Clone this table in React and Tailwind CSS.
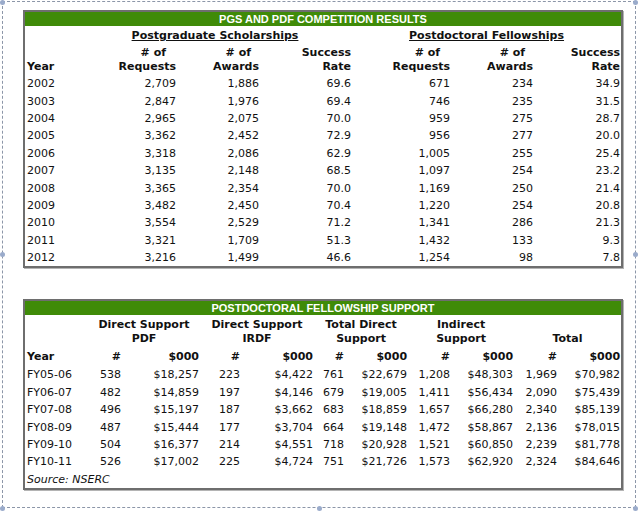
import React from 'react';

const pgs = [
  ['2002', '2,709', '1,886', '69.6', '671', '234', '34.9'],
  ['3003', '2,847', '1,976', '69.4', '746', '235', '31.5'],
  ['2004', '2,965', '2,075', '70.0', '959', '275', '28.7'],
  ['2005', '3,362', '2,452', '72.9', '956', '277', '20.0'],
  ['2006', '3,318', '2,086', '62.9', '1,005', '255', '25.4'],
  ['2007', '3,135', '2,148', '68.5', '1,097', '254', '23.2'],
  ['2008', '3,365', '2,354', '70.0', '1,169', '250', '21.4'],
  ['2009', '3,482', '2,450', '70.4', '1,220', '254', '20.8'],
  ['2010', '3,554', '2,529', '71.2', '1,341', '286', '21.3'],
  ['2011', '3,321', '1,709', '51.3', '1,432', '133', '9.3'],
  ['2012', '3,216', '1,499', '46.6', '1,254', '98', '7.8'],
];

const pdf = [
  ['FY05-06', '538', '$18,257', '223', '$4,422', '761', '$22,679', '1,208', '$48,303', '1,969', '$70,982'],
  ['FY06-07', '482', '$14,859', '197', '$4,146', '679', '$19,005', '1,411', '$56,434', '2,090', '$75,439'],
  ['FY07-08', '496', '$15,197', '187', '$3,662', '683', '$18,859', '1,657', '$66,280', '2,340', '$85,139'],
  ['FY08-09', '487', '$15,444', '177', '$3,704', '664', '$19,148', '1,472', '$58,867', '2,136', '$78,015'],
  ['FY09-10', '504', '$16,377', '214', '$4,551', '718', '$20,928', '1,521', '$60,850', '2,239', '$81,778'],
  ['FY10-11', '526', '$17,002', '225', '$4,724', '751', '$21,726', '1,573', '$62,920', '2,324', '$84,646'],
];

const font = { fontFamily: '"DejaVu Sans", Verdana, sans-serif' };

function Box({ title, children }) {
  return (
    <div className="w-[600px] border-2 border-[#6e6e6e] bg-white shadow-[1px_1px_0_#b4b4b4]">
      <div className="h-[14px] bg-[#3f8b08] text-center text-[11px] font-bold leading-[14px] text-white font-['Liberation_Sans',Arial,sans-serif]">
        {title}
      </div>
      {children}
    </div>
  );
}

function Handle({ className }) {
  return <span className={`absolute h-[5px] w-[5px] rounded-full bg-[#9aabcb] ${className}`} />;
}

export default function App() {
  return (
    <div className="relative h-[511px] w-[640px] bg-white text-[#111]" style={font}>
      <div className="ml-[2px] mt-[1px] h-[507px] w-[634px] border border-dashed border-[#8c96a8] pl-[20px] pt-[8px]">
        <Box title="PGS AND PDF COMPETITION RESULTS">
          <table className="w-full table-fixed border-collapse text-[11px]">
            <colgroup>
              <col className="w-[53px]" />
              <col className="w-[99px]" />
              <col className="w-[83px]" />
              <col className="w-[92px]" />
              <col className="w-[99px]" />
              <col className="w-[83px]" />
              <col className="w-[87px]" />
            </colgroup>
            <thead className="font-bold">
              <tr className="h-[19px]">
                <th />
                <th colSpan={3} className="pt-[2px] text-center font-bold underline">Postgraduate Scholarships</th>
                <th colSpan={3} className="pt-[2px] text-center font-bold underline">Postdoctoral Fellowships</th>
              </tr>
              <tr className="h-[30px] align-bottom leading-[14px]">
                <th className="pb-[1px] pl-[2px] text-left">Year</th>
                <th className="pb-[1px] pr-[1px] text-right">
                  <div className="ml-auto w-fit pr-[10px] text-center"># of</div>
                  Requests
                </th>
                <th className="pb-[1px] pr-[1px] text-right">
                  <div className="ml-auto w-fit pr-[8px] text-center"># of</div>
                  Awards
                </th>
                <th className="pb-[1px] pr-[1px] text-right">Success<br />Rate</th>
                <th className="pb-[1px] pr-[1px] text-right">
                  <div className="ml-auto w-fit pr-[10px] text-center"># of</div>
                  Requests
                </th>
                <th className="pb-[1px] pr-[1px] text-right">
                  <div className="ml-auto w-fit pr-[8px] text-center"># of</div>
                  Awards
                </th>
                <th className="pb-[1px] pr-[1px] text-right">Success<br />Rate</th>
              </tr>
            </thead>
            <tbody>
              {pgs.map((r) => (
                <tr key={r[0]} className="h-[17.4px] leading-[17px]">
                  {r.map((c, i) => (
                    <td key={i} className={i === 0 ? 'pl-[2px] text-left' : 'pr-[1px] text-right'}>{c}</td>
                  ))}
                </tr>
              ))}
            </tbody>
          </table>
        </Box>

        <div className="h-[31px]" />

        <Box title="POSTDOCTORAL FELLOWSHIP SUPPORT">
          <table className="w-full table-fixed border-collapse text-[11px]">
            <colgroup>
              <col className="w-[63px]" />
              <col className="w-[34px]" />
              <col className="w-[78px]" />
              <col className="w-[41px]" />
              <col className="w-[73px]" />
              <col className="w-[31px]" />
              <col className="w-[63px]" />
              <col className="w-[43px]" />
              <col className="w-[63px]" />
              <col className="w-[44px]" />
              <col className="w-[63px]" />
            </colgroup>
            <thead>
              <tr className="h-[32px] align-bottom leading-[14px]">
                <th />
                <th colSpan={2} className="pb-[1px] text-center font-bold">Direct Support<br />PDF</th>
                <th colSpan={2} className="pb-[1px] text-center font-bold">Direct Support<br />IRDF</th>
                <th colSpan={2} className="pb-[1px] text-center font-bold">Total Direct<br />Support</th>
                <th colSpan={2} className="pb-[1px] text-center font-bold">Indirect<br />Support</th>
                <th colSpan={2} className="pb-[1px] text-center font-bold">Total</th>
              </tr>
              <tr className="h-[19px] leading-[17px]">
                <th className="pl-[2px] text-left font-bold">Year</th>
                {['#', '$000', '#', '$000', '#', '$000', '#', '$000', '#', '$000'].map((h, i) => (
                  <th key={i} className="pr-[1px] text-right font-bold">{h}</th>
                ))}
              </tr>
            </thead>
            <tbody>
              {pdf.map((r) => (
                <tr key={r[0]} className="h-[17.4px] leading-[17px]">
                  {r.map((c, i) => (
                    <td key={i} className={i === 0 ? 'pl-[2px] text-left' : 'pr-[1px] text-right'}>{c}</td>
                  ))}
                </tr>
              ))}
              <tr className="h-[17.4px] leading-[17px]">
                <td colSpan={11} className="pl-[2px] text-left italic">Source: NSERC</td>
              </tr>
            </tbody>
          </table>
        </Box>
      </div>

      <Handle className="left-0 top-[-1px]" />
      <Handle className="right-[2px] top-[-1px]" />
      <Handle className="left-0 top-[251px]" />
      <Handle className="right-[2px] top-[251px]" />
      <Handle className="left-0 top-[505px]" />
      <Handle className="left-[317px] top-[505px]" />
      <Handle className="right-[2px] top-[505px]" />
    </div>
  );
}
